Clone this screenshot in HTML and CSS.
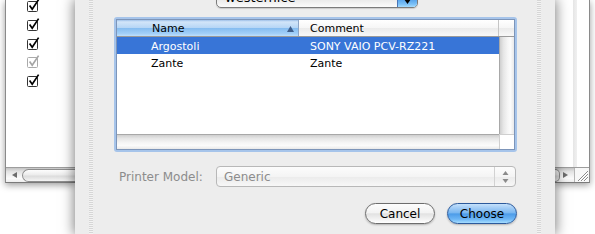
FILE: index.html
```html
<!DOCTYPE html>
<html>
<head>
<meta charset="utf-8">
<link rel="stylesheet" href="styles.css">
</head>
<body>
<div class="screen">
  <div class="side-left">
    <div class="win win-left">
      <div class="win-body">
        <ul class="checks">
          <li class="check"><svg viewBox="0 0 14 14"><rect x="1.5" y="2.5" width="10" height="10" rx="1" fill="#fff" stroke="#333"/><path d="M3.6 6.6 L6.2 10.2 L12.6 0.6" fill="none" stroke="#000" stroke-width="1.7"/></svg></li>
          <li class="check"><svg viewBox="0 0 14 14"><rect x="1.5" y="2.5" width="10" height="10" rx="1" fill="#fff" stroke="#333"/><path d="M3.6 6.6 L6.2 10.2 L12.6 0.6" fill="none" stroke="#000" stroke-width="1.7"/></svg></li>
          <li class="check"><svg viewBox="0 0 14 14"><rect x="1.5" y="2.5" width="10" height="10" rx="1" fill="#fff" stroke="#333"/><path d="M3.6 6.6 L6.2 10.2 L12.6 0.6" fill="none" stroke="#000" stroke-width="1.7"/></svg></li>
          <li class="check"><svg viewBox="0 0 14 14"><rect x="1.5" y="2.5" width="10" height="10" rx="1" fill="#fff" stroke="#aaa"/><path d="M3.6 6.6 L6.2 10.2 L12.6 0.6" fill="none" stroke="#a5a5a5" stroke-width="1.7"/></svg></li>
          <li class="check"><svg viewBox="0 0 14 14"><rect x="1.5" y="2.5" width="10" height="10" rx="1" fill="#fff" stroke="#333"/><path d="M3.6 6.6 L6.2 10.2 L12.6 0.6" fill="none" stroke="#000" stroke-width="1.7"/></svg></li>
        </ul>
      </div>
      <div class="hscroll">
        <span class="arrow arrow-left"></span>
        <span class="thumb thumb-left"></span>
      </div>
    </div>
  </div>

  <div class="sheet">
    <div class="popup-top">
      <span class="popup-text">westernice</span>
      <span class="popup-arrow"><svg width="7" height="5" viewBox="0 0 7 5"><path d="M0 0 H7 L3.5 5 Z" fill="#000"/></svg></span>
    </div>

    <div class="ring">
      <div class="table">
        <div class="thead">
          <div class="th th-name"><span>Name</span><svg class="sort" width="7" height="6" viewBox="0 0 7 6"><path d="M3.5 0 L7 6 H0 Z" fill="#3f5f8c"/></svg></div>
          <div class="th th-comment">Comment</div>
          <div class="th th-corner"></div>
        </div>
        <div class="tmain">
          <div class="rows">
            <div class="row selected"><span class="c1">Argostoli</span><span class="c2">SONY VAIO PCV-RZ221</span></div>
            <div class="row"><span class="c1">Zante</span><span class="c2">Zante</span></div>
          </div>
          <div class="vscroll"></div>
        </div>
        <div class="tfoot">
          <div class="hscroll-t"></div>
          <div class="corner"></div>
        </div>
      </div>
    </div>

    <div class="model-row">
      <span class="label">Printer Model:</span>
      <div class="popup-model">
        <span class="model-text">Generic</span>
        <span class="stepper">
          <svg width="7" height="14" viewBox="0 0 7 14"><path d="M3.5 1 L6.5 5 H0.5 Z" fill="#8a8a8a"/><path d="M0.5 9 H6.5 L3.5 13 Z" fill="#8a8a8a"/></svg>
        </span>
      </div>
    </div>

    <div class="buttons">
      <button class="btn">Cancel</button>
      <button class="btn btn-default">Choose</button>
    </div>
  </div>

  <div class="side-right">
    <div class="win win-right">
      <div class="win-body-r"></div>
      <div class="hscroll">
        <span class="thumb thumb-right"></span>
        <span class="arrow arrow-right"></span>
        <span class="grip"><svg width="14" height="14" viewBox="0 0 14 14"><path d="M13 3 L3 13 M13 6 L6 13 M13 9 L9 13" stroke="#8a8a8a" stroke-width="1"/><path d="M13 4 L4 13 M13 7 L7 13 M13 10 L10 13" stroke="#fff" stroke-width="1"/></svg></span>
      </div>
    </div>
  </div>
</div>
</body>
</html>
```

FILE: styles.css
```css
* { box-sizing: border-box; margin: 0; padding: 0; }
html, body { width: 595px; height: 234px; overflow: hidden; background: #fff; }
body { font-family: "DejaVu Sans", "Liberation Sans", sans-serif; font-size: 12px; color: #000; }

.screen { display: flex; width: 595px; height: 234px; }

/* ---------- background window pieces ---------- */
.win {
  height: 183px;
  background: #fff;
  display: flex;
  flex-direction: column;
  box-shadow: 0 2px 7px rgba(0, 0, 0, .4);
}
.side-left { flex: none; width: 75px; padding-left: 5px; }
.win-left { border-left: 1px solid #8a8a8a; border-bottom: 1px solid #7a7a7a; }
.win-body { flex: 1; overflow: hidden; padding-left: 20px; }
.checks { list-style: none; margin-top: -6px; }
.check { height: 18.75px; padding-top: 5px; }
.check svg { display: block; width: 14px; height: 14px; }

.hscroll {
  flex: none;
  height: 15px;
  display: flex;
  align-items: center;
  border-top: 1px solid #9d9d9d;
  background: linear-gradient(#c4c4c4, #e3e3e3 25%, #f3f3f3 55%, #fbfbfb 75%, #eeeeee);
}
.arrow { flex: none; width: 0; height: 0; border-top: 3.5px solid transparent; border-bottom: 3.5px solid transparent; }
.arrow-left { margin-left: 6px; border-right: 5px solid #6d6d6d; }
.arrow-right { margin-left: 3px; border-left: 5px solid #6d6d6d; }
.thumb {
  height: 13px;
  border: 1px solid #8e8e8e;
  background: linear-gradient(#fdfdfd, #ececec 45%, #dcdcdc 55%, #f4f4f4);
}
.thumb-left { margin-left: 5px; flex: 1; border-right: none; border-radius: 7px 0 0 7px; }
.thumb-right { width: 5px; flex: none; border-left: none; border-radius: 0 7px 7px 0; }

.side-right { flex: none; width: 40px; padding-right: 5px; }
.win-right { border-right: 1px solid #8a8a8a; border-bottom: 1px solid #7a7a7a; }
.win-body-r {
  flex: 1;
  background: linear-gradient(to right, #fff 18px, #e6e6e6 18px, #f0f0f0 22px, #fff 22px);
}
.grip {
  margin-left: auto;
  width: 15px;
  height: 100%;
  border-left: 1px solid #b5b5b5;
  background: #f7f7f7;
  display: flex;
  align-items: flex-end;
  justify-content: flex-end;
}
.grip svg { display: block; }

/* ---------- sheet ---------- */
.sheet {
  flex: none;
  width: 480px;
  height: 234px;
  position: relative;
  z-index: 1;
  padding: 0 38px 0 39px;
  display: flex;
  flex-direction: column;
  background-color: #ededed;
  background-image:
    repeating-linear-gradient(#d6d6d6 0 1px, #f3f3f3 1px 2px),
    repeating-linear-gradient(#d6d6d6 0 1px, #f3f3f3 1px 2px);
  background-size: 4px 100%, 4px 100%;
  background-position: 14px 0, 462px 0;
  background-repeat: no-repeat;
  box-shadow: 0 0 12px 1px rgba(0, 0, 0, .5);
}

.popup-top {
  flex: none;
  margin-top: -12px;
  margin-left: 102px;
  width: 202px;
  height: 20px;
  display: flex;
  border: 1px solid #7b7b7b;
  border-radius: 5px;
  overflow: hidden;
  font-size: 13px;
  background: linear-gradient(#fff, #f3f3f3 50%, #e7e7e7 52%, #fbfbfb);
  box-shadow: 0 1px 1px rgba(0, 0, 0, .15);
}
.popup-text { flex: 1; padding-left: 8px; line-height: 18px; }
.popup-arrow {
  width: 20px;
  border-left: 1px solid #4a76b8;
  display: flex;
  align-items: flex-end;
  justify-content: center;
  padding-bottom: 3px;
  background: linear-gradient(#c5e1fb, #8fc3f4 45%, #4c9be8 52%, #7cc1f7 85%, #a6ddff);
}
.popup-arrow svg { display: block; }

/* table */
.ring {
  flex: none;
  margin-top: 9px;
  height: 135px;
  border: 2px solid #a6c4ea;
  border-radius: 3px;
}
.table {
  height: 100%;
  border: 1px solid #7d95b9;
  display: flex;
  flex-direction: column;
  background: #fff;
  font-size: 11px;
}
.thead { flex: none; display: flex; height: 17px; border-bottom: 1px solid #9a9a9a; }
.th {
  height: 16px;
  display: flex;
  align-items: center;
  padding-top: 1px;
  background: linear-gradient(#ffffff, #f6f6f6 50%, #ebebeb 52%, #f8f8f8);
}
.th-name {
  width: 182px;
  padding-left: 35px;
  padding-right: 4px;
  justify-content: space-between;
  border-right: 1px solid #8ea6c6;
  background: linear-gradient(#9ec0e8, #d2e5f9 12%, #b6d6f6 48%, #86bdf0 52%, #a2cff8 85%, #bfe0fc);
}
.sort { display: block; }
.th-comment { flex: 1; padding-left: 11px; border-right: 1px solid #c5c5c5; }
.th-corner { width: 15px; }

.tmain { flex: 1; display: flex; min-height: 0; }
.rows { flex: 1; }
.row { height: 17px; display: flex; align-items: center; padding-top: 2px; }
.row .c1 { flex: none; width: 182px; padding-left: 34px; }
.row .c2 { padding-left: 11px; }
.selected { background: #3875d7; color: #fff; }
.vscroll {
  width: 15px;
  border-left: 1px solid #a8a8a8;
  background: linear-gradient(to right, #cfcfcf, #e6e6e6 25%, #f5f5f5 55%, #fbfbfb 75%, #e9e9e9);
}
.tfoot { flex: none; height: 15px; display: flex; }
.hscroll-t {
  flex: 1;
  border-top: 1px solid #a8a8a8;
  background: linear-gradient(#cfcfcf, #e6e6e6 25%, #f5f5f5 55%, #fbfbfb 75%, #e9e9e9);
}
.corner { width: 15px; border-top: 1px solid #cfcfcf; border-left: 1px solid #cfcfcf; background: #fff; }

/* printer model */
.model-row {
  flex: none;
  margin-top: 14px;
  height: 21px;
  display: flex;
  align-items: center;
  padding-left: 5px;
  padding-right: 1px;
}
.label { color: #8c8c8c; padding-top: 1px; }
.popup-model {
  margin-left: auto;
  width: 300px;
  height: 21px;
  display: flex;
  align-items: center;
  border: 1px solid #b8b8b8;
  border-radius: 4px;
  color: #8c8c8c;
  background: linear-gradient(#fcfcfc, #f4f4f4 50%, #ebebeb 52%, #f7f7f7);
}
.model-text { flex: 1; padding-left: 7px; padding-top: 1px; }
.stepper {
  width: 21px;
  height: 100%;
  border-left: 1px solid #d2d2d2;
  display: flex;
  align-items: center;
  justify-content: center;
}
.stepper svg { display: block; }

/* buttons */
.buttons {
  flex: none;
  margin-top: 16px;
  display: flex;
  justify-content: flex-end;
  gap: 12px;
}
.btn {
  width: 70px;
  height: 21px;
  border-radius: 11px;
  font: 12px "DejaVu Sans", "Liberation Sans", sans-serif;
  color: #000;
  border: 1px solid #6d6d6d;
  background: linear-gradient(#fdfdfd, #f3f3f3 45%, #e2e2e2 52%, #f2f2f2 80%, #ffffff);
  box-shadow: 0 1px 2px rgba(0, 0, 0, .25);
}
.btn-default {
  border-color: #2c5a9c;
  background: linear-gradient(#c5e1fb, #a3cdf6 20%, #78b6f0 47%, #4c9be8 52%, #6db6f5 80%, #a6ddff);
}
```
